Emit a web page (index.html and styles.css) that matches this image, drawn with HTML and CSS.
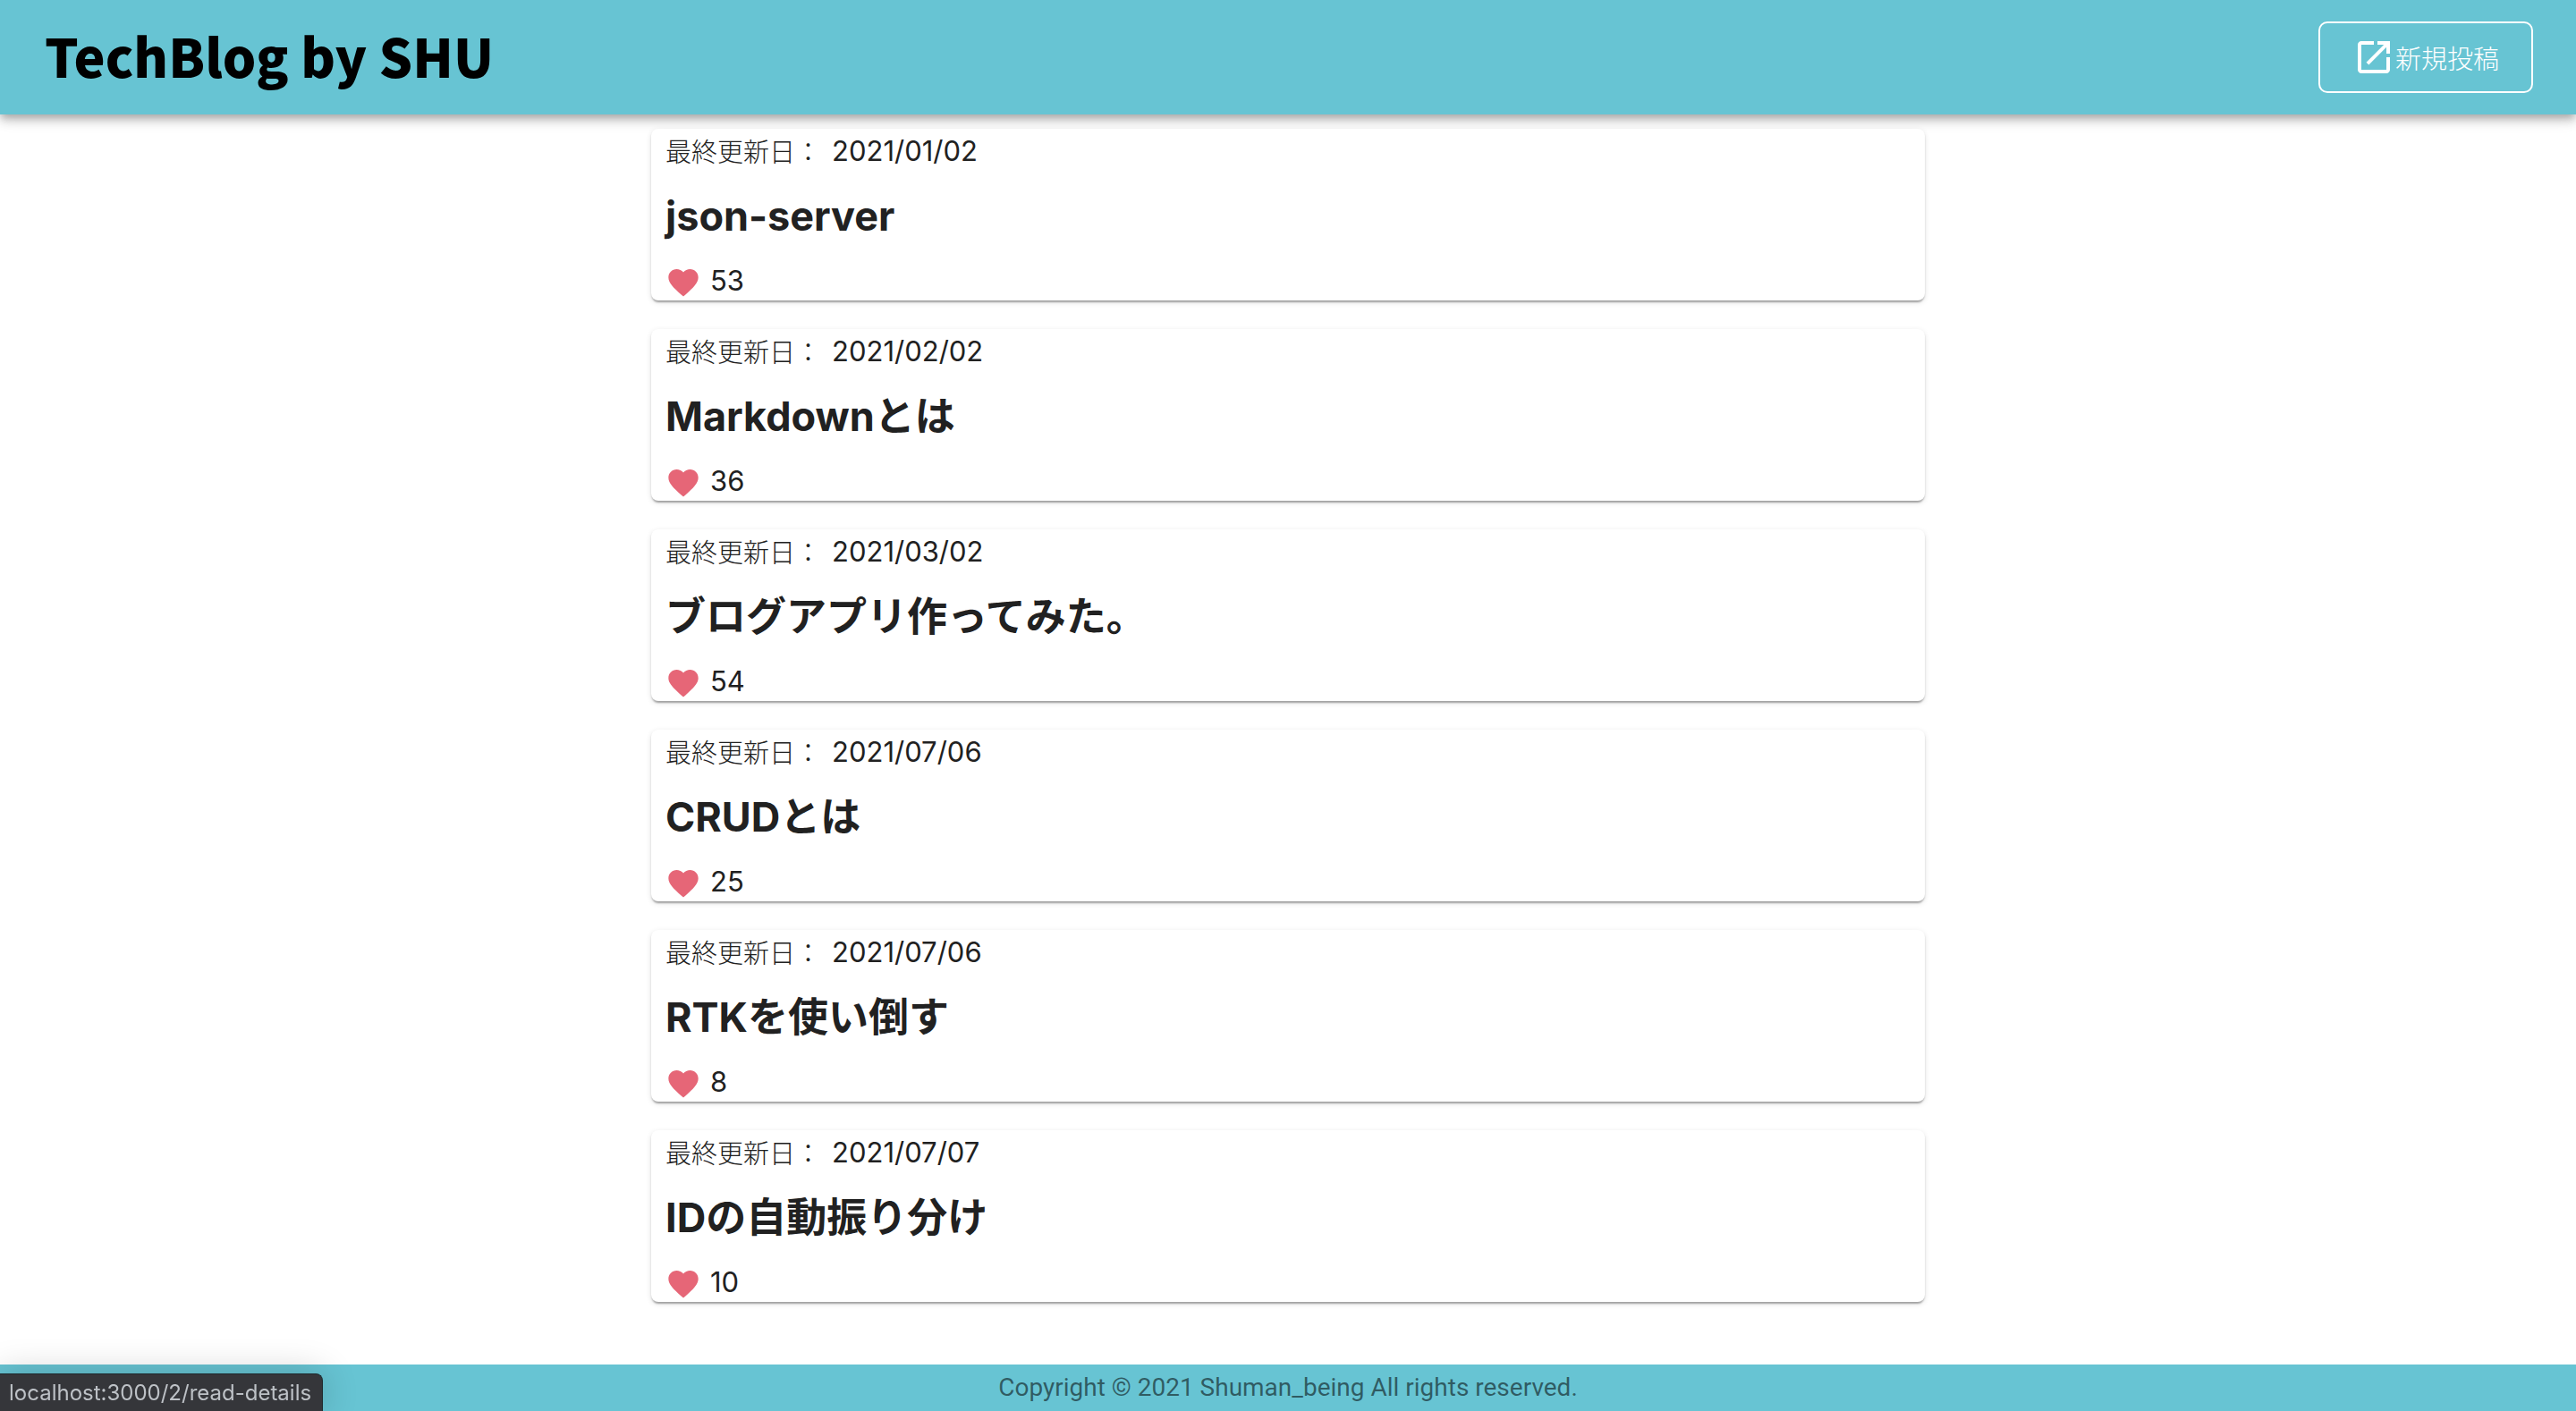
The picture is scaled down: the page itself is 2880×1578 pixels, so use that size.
FILE: index.html
```
<!DOCTYPE html>
<html lang="ja">
  <head>
    <meta charset="utf-8">
    <meta name="viewport" content="width=device-width, initial-scale=1">
    <title>TechBlog by SHU</title>
    <link rel="stylesheet" href="styles.css">
  </head>
  <body>

  <!-- icons -->
  <svg class="sprite" aria-hidden="true">
    <symbol id="heart" viewBox="0 0 24 24">
      <path d="M12 21.35l-1.45-1.32C5.4 15.36 2 12.28 2 8.5 2 5.42 4.42 3 7.5 3c1.74 0 3.41.81 4.5 2.09C13.09 3.81 14.76 3 16.5 3 19.58 3 22 5.42 22 8.5c0 3.78-3.4 6.86-8.55 11.54L12 21.35z"/>
    </symbol>
    <symbol id="launch" viewBox="0 0 24 24">
      <path d="M19 19H5V5h7V3H5c-1.11 0-2 .9-2 2v14c0 1.1.89 2 2 2h14c1.1 0 2-.9 2-2v-7h-2v7zM14 3v2h3.59l-9.83 9.83 1.41 1.41L19 6.41V10h2V3h-7z"/>
    </symbol>
  </svg>

  <header class="header">
    <h1 class="logo">TechBlog by SHU</h1>
    <button type="button" class="new-post">
      <svg class="launch"><use href="#launch"/></svg>
      <span>新規投稿</span>
    </button>
  </header>

  <main class="posts">
    <article class="card">
      <p class="date"><span class="label">最終更新日：</span><time>2021/01/02</time></p>
      <h2 class="title">json-server</h2>
      <p class="likes"><svg class="heart"><use href="#heart"/></svg><span>53</span></p>
    </article>

    <article class="card">
      <p class="date"><span class="label">最終更新日：</span><time>2021/02/02</time></p>
      <h2 class="title">Markdownとは</h2>
      <p class="likes"><svg class="heart"><use href="#heart"/></svg><span>36</span></p>
    </article>

    <article class="card">
      <p class="date"><span class="label">最終更新日：</span><time>2021/03/02</time></p>
      <h2 class="title">ブログアプリ作ってみた。</h2>
      <p class="likes"><svg class="heart"><use href="#heart"/></svg><span>54</span></p>
    </article>

    <article class="card">
      <p class="date"><span class="label">最終更新日：</span><time>2021/07/06</time></p>
      <h2 class="title">CRUDとは</h2>
      <p class="likes"><svg class="heart"><use href="#heart"/></svg><span>25</span></p>
    </article>

    <article class="card">
      <p class="date"><span class="label">最終更新日：</span><time>2021/07/06</time></p>
      <h2 class="title">RTKを使い倒す</h2>
      <p class="likes"><svg class="heart"><use href="#heart"/></svg><span>8</span></p>
    </article>

    <article class="card">
      <p class="date"><span class="label">最終更新日：</span><time>2021/07/07</time></p>
      <h2 class="title">IDの自動振り分け</h2>
      <p class="likes"><svg class="heart"><use href="#heart"/></svg><span>10</span></p>
    </article>
  </main>

  <footer class="footer">Copyright © 2021 Shuman_being All rights reserved.</footer>

  <div class="status">localhost:3000/2/read-details</div>

  </body>
</html>
```
FILE: styles.css
```
* {
  box-sizing: border-box;
}

body {
  margin: 0;
  min-height: 100vh;
  display: flex;
  flex-direction: column;
  background: #fff;
  color: #212121;
  font-family: Inter, "Noto Sans CJK JP", sans-serif;
  font-size: 31px;
}

h1, h2, p {
  margin: 0;
}

.sprite {
  display: none;
}

/* header */

.header {
  display: flex;
  align-items: center;
  justify-content: space-between;
  height: 128px;
  padding: 0 48px 0 50px;
  background: #67c4d3;
  box-shadow: 0 4px 8px -2px rgba(0,0,0,0.2), 0 8px 10px 0 rgba(0,0,0,0.14), 0 2px 20px 0 rgba(0,0,0,0.12);
}

.logo {
  color: #000;
  font-family: "Noto Sans CJK JP", sans-serif;
  font-size: 59px;
  font-weight: 900;
  line-height: 76px;
  padding-bottom: 4px;
}

.new-post {
  display: flex;
  align-items: center;
  height: 80px;
  padding: 0 36px;
  border: 2px solid #fff;
  border-radius: 10px;
  background: none;
  color: #fff;
  font-family: "Noto Sans CJK JP", sans-serif;
  font-size: 29px;
  font-weight: 300;
  cursor: pointer;
}

.launch {
  width: 48px;
  height: 48px;
  fill: #fff;
}

/* posts */

.posts {
  display: flex;
  flex-direction: column;
  gap: 32px;
  width: 50%;
  margin: 0 auto;
  padding: 16px 8px 64px;
}

.card {
  padding: 0 16px;
  border-radius: 8px;
  background: #fff;
  box-shadow: 0 4px 2px -2px rgba(0,0,0,0.2), 0 2px 2px 0 rgba(0,0,0,0.14), 0 2px 6px 0 rgba(0,0,0,0.12);
}

.date {
  display: flex;
  align-items: center;
  gap: 12px;
  height: 48px;
}

.label {
  font-family: "Noto Sans CJK JP", sans-serif;
  font-size: 29px;
  font-weight: 300;
  line-height: 48px;
}

.title {
  height: 98px;
  font-size: 45px;
  font-weight: 700;
  line-height: 100px;
}

.likes {
  display: flex;
  align-items: center;
  gap: 10px;
  height: 46px;
}

.heart {
  align-self: flex-end;
  width: 40px;
  height: 40px;
  fill: #e66677;
}

/* footer */

.footer {
  margin-top: auto;
  background: #67c4d3;
  color: rgba(0,0,0,0.54);
  font-family: Roboto, sans-serif;
  font-size: 28px;
  line-height: 52px;
  text-align: center;
}

.status {
  position: fixed;
  left: 0;
  bottom: 0;
  padding: 0 12px 0 10px;
  border-top: 1px solid #1f2a2e;
  border-right: 1px solid #1f2a2e;
  border-radius: 0 8px 0 0;
  background: #35363a;
  box-shadow: 0 0 40px rgba(0,0,0,0.2);
  color: #bdc1c6;
  font-size: 24px;
  line-height: 41px;
}
```
